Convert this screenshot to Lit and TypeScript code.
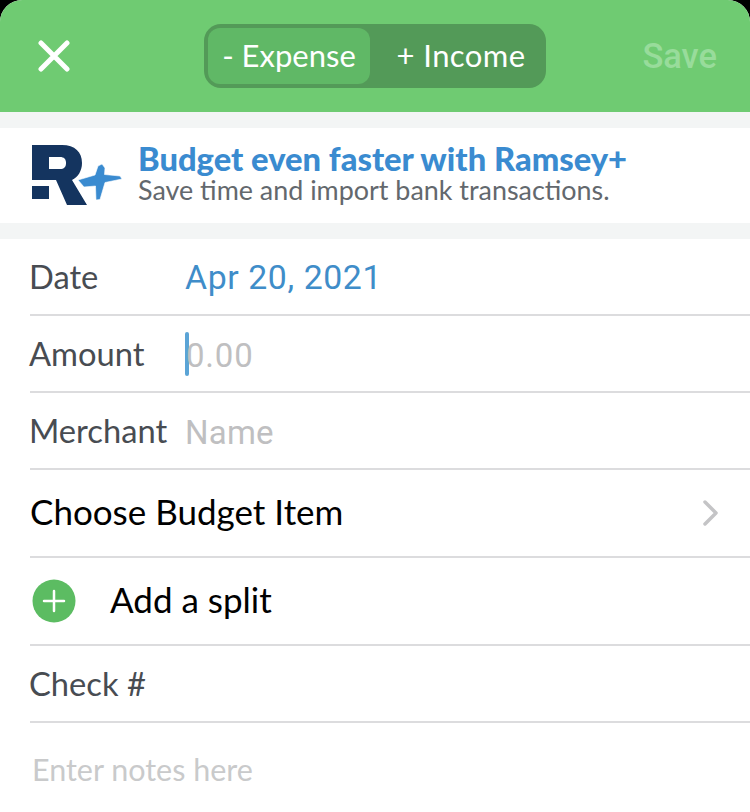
import { LitElement, css, html } from 'lit'
import { customElement } from 'lit/decorators.js'

@customElement('app-root')
export class AppRoot extends LitElement {
  static styles = css`
    :host {
      display: block;
      width: 750px;
      height: 812px;
      overflow: hidden;
      background: #000;
      font-family: Lato, 'Open Sans', sans-serif;
    }
    .screen {
      height: 812px;
      background: #fff;
      border-radius: 22px 22px 0 0;
      overflow: hidden;
    }
    .header {
      height: 112px;
      box-sizing: border-box;
      background: #6fcb72;
      display: grid;
      grid-template-columns: 1fr 342px 1fr;
      align-items: center;
      padding: 0 33px;
    }
    .close {
      width: 32px;
      height: 32px;
      margin-left: 5px;
      display: block;
    }
    .segment {
      display: flex;
      height: 64px;
      box-sizing: border-box;
      padding: 4px;
      background: #539a58;
      border-radius: 17px;
      color: #fff;
      font-size: 31px;
    }
    .segment span {
      display: flex;
      align-items: center;
      justify-content: center;
      padding-bottom: 3px;
      border-radius: 12px;
    }
    .segment .active {
      width: 162px;
      background: #60b866;
    }
    .segment .other {
      flex: 1;
      padding-left: 10px;
      letter-spacing: 0.4px;
    }
    .save {
      justify-self: end;
      font-size: 34.5px;
      font-weight: 500;
      font-family: Roboto, sans-serif;
      color: #98dc9b;
    }
    .band {
      height: 16px;
      background: #f3f5f5;
    }
    .promo {
      height: 95px;
      display: flex;
      align-items: center;
      padding-left: 32px;
      gap: 16px;
    }
    .logo {
      width: 90px;
      height: 62px;
      display: block;
      flex: none;
    }
    .promo-text {
      padding-bottom: 6px;
    }
    .promo-title {
      font-size: 32.7px;
      line-height: 34px;
      font-weight: 900;
      color: #3a8bd0;
    }
    .promo-sub {
      font-size: 26.9px;
      line-height: 28px;
      color: #63686d;
    }
    .rows {
      margin-left: 30px;
    }
    .row {
      display: flex;
      align-items: center;
      box-sizing: border-box;
      height: 77px;
      border-bottom: 2px solid #dcdcde;
      font-size: 32.7px;
      color: #484c52;
    }
    .label {
      width: 156px;
      margin-left: -1px;
      flex: none;
      padding-bottom: 1px;
    }
    .value {
      font-family: Roboto, sans-serif;
      font-size: 33.8px;
      letter-spacing: 0.6px;
      padding-top: 1px;
      color: #3f8dc9;
    }
    .placeholder {
      font-size: 33px;
      letter-spacing: 0.2px;
      padding-top: 3px;
      color: #bfbfc1;
    }
    .amount {
      display: flex;
      align-items: center;
    }
    .amount .placeholder {
      letter-spacing: 0.8px;
    }
    .caret {
      width: 4px;
      height: 44px;
      margin-right: -3px;
      border-radius: 2px;
      background: #5ba4d6;
    }
    .tall {
      height: 88px;
      font-size: 35px;
      color: #000;
      justify-content: space-between;
    }
    .tall span {
      padding-bottom: 4px;
    }
    .chevron {
      width: 20px;
      height: 28px;
      margin-right: 29px;
      display: block;
    }
    .split {
      justify-content: flex-start;
      gap: 34px;
      padding-left: 2px;
    }
    .plus {
      width: 44px;
      height: 44px;
      display: block;
      flex: none;
    }
    .notes {
      padding: 28px 0 0 32px;
      font-size: 30.5px;
      color: #c9cacb;
    }
  `

  render() {
    return html`
      <div class="screen">
        <div class="header">
          <svg class="close" viewBox="0 0 32 32">
            <path d="M3 3 L29 29 M29 3 L3 29" stroke="#fff" stroke-width="5" stroke-linecap="round" />
          </svg>
          <div class="segment">
            <span class="active">- Expense</span>
            <span class="other">+ Income</span>
          </div>
          <div class="save">Save</div>
        </div>
        <div class="band"></div>
        <div class="promo">
          <svg class="logo" viewBox="32 146 90 62">
            <path
              fill="#14345f"
              fill-rule="evenodd"
              d="M32 146 H62 C75 146 82 153 82 164 C82 172 78 178 72 181 H32 Z M49 158 V170 H60 C64 170 66 168 66 164 C66 160 64 158 60 158 Z"
            />
            <path fill="#14345f" d="M32 187 H49 V200 H32 Z M56 181 H72 L87 206 H67 Z" />
            <path
              fill="#3a8bd0"
              stroke="#fff"
              stroke-width="0.600"
              d="M78 181 L95 176 L98 167 L102 165 L105 169 L104.500 175.500 L120 177 L122 180 L105 183.500 L100 200.500 L96 201 L95.500 187 L84 188 Z"
            />
          </svg>
          <div class="promo-text">
            <div class="promo-title">Budget even faster with Ramsey+</div>
            <div class="promo-sub">Save time and import bank transactions.</div>
          </div>
        </div>
        <div class="band"></div>
        <div class="rows">
          <div class="row">
            <span class="label">Date</span>
            <span class="value">Apr 20, 2021</span>
          </div>
          <div class="row">
            <span class="label">Amount</span>
            <span class="amount">
              <span class="caret"></span>
              <span class="value placeholder">0.00</span>
            </span>
          </div>
          <div class="row">
            <span class="label">Merchant</span>
            <span class="value placeholder">Name</span>
          </div>
          <div class="row tall">
            <span>Choose Budget Item</span>
            <svg class="chevron" viewBox="0 0 20 28">
              <path d="M4 3 L15 14 L4 25" fill="none" stroke="#c4c4c6" stroke-width="3.500" stroke-linecap="round" stroke-linejoin="round" />
            </svg>
          </div>
          <div class="row tall split">
            <svg class="plus" viewBox="0 0 44 44">
              <circle cx="22" cy="22" r="21.500" fill="#5cbc62" />
              <path d="M12 22 H32 M22 12 V32" stroke="#fff" stroke-width="2.500" stroke-linecap="round" />
            </svg>
            <span>Add a split</span>
          </div>
          <div class="row">
            <span class="label">Check #</span>
          </div>
        </div>
        <div class="notes">Enter notes here</div>
      </div>
    `
  }
}

declare global {
  interface HTMLElementTagNameMap {
    'app-root': AppRoot
  }
}
